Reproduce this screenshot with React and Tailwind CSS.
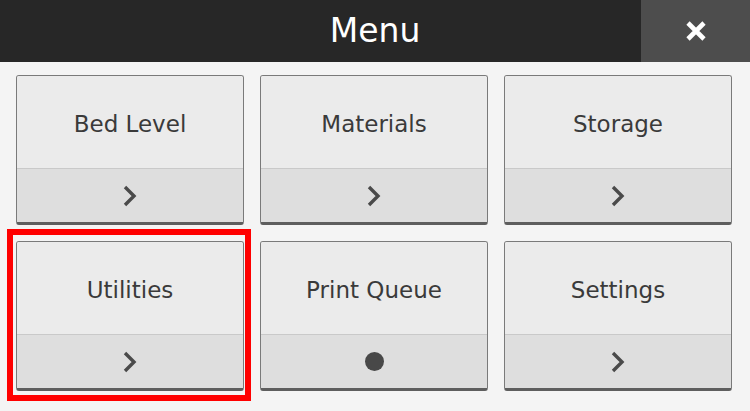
const items = [
  { label: 'Bed Level', icon: 'chevron' },
  { label: 'Materials', icon: 'chevron' },
  { label: 'Storage', icon: 'chevron' },
  { label: 'Utilities', icon: 'chevron', selected: true },
  { label: 'Print Queue', icon: 'dot' },
  { label: 'Settings', icon: 'chevron' },
];

function Chevron() {
  return (
    <svg width="16" height="24" viewBox="0 0 16 24" fill="none">
      <polyline points="3,3 12,12 3,21" stroke="#4a4a4a" strokeWidth="3.4" strokeLinecap="butt" strokeLinejoin="miter" />
    </svg>
  );
}

function MenuCard({ item }) {
  return (
    <div className="relative h-[150px]">
      {item.selected && (
        <div className="absolute -left-[9px] -top-[12px] w-[244px] h-[172px] border-[6px] border-[#ff0000] pointer-events-none" />
      )}
      <div className="h-full flex flex-col rounded-[3px] border border-[#7a7a7a] border-b-[3px] border-b-[#5e5e5e] overflow-hidden">
        <div className="h-[93px] flex items-center justify-center pt-[4px] bg-[#ebebeb] text-[23px] text-[#3a3a3a] border-b border-[#c9c9c9]">
          {item.label}
        </div>
        <div className="flex-1 flex items-center justify-center bg-[#dedede]">
          {item.icon === 'dot' ? (
            <div className="w-[19px] h-[19px] rounded-full bg-[#484848]" />
          ) : (
            <Chevron />
          )}
        </div>
      </div>
    </div>
  );
}

export default function App() {
  return (
    <div className="w-[750px] h-[411px] bg-[#f4f4f4] overflow-hidden" style={{ fontFamily: '"DejaVu Sans", sans-serif' }}>
      <div className="h-[62px] flex bg-[#272727]">
        <div className="flex-1 flex items-center justify-center text-white text-[33px] pl-[109px]">
          Menu
        </div>
        <button className="w-[109px] h-full flex items-center justify-center bg-[#4d4d4d]">
          <svg width="22" height="22" viewBox="0 0 22 22">
            <path d="M3 3 L19 19 M19 3 L3 19" stroke="#ffffff" strokeWidth="4.6" strokeLinecap="butt" />
          </svg>
        </button>
      </div>
      <div className="grid grid-cols-3 gap-x-4 gap-y-4 pl-4 pr-[18px] pt-[13px]">
        {items.map((item) => (
          <MenuCard key={item.label} item={item} />
        ))}
      </div>
    </div>
  );
}
